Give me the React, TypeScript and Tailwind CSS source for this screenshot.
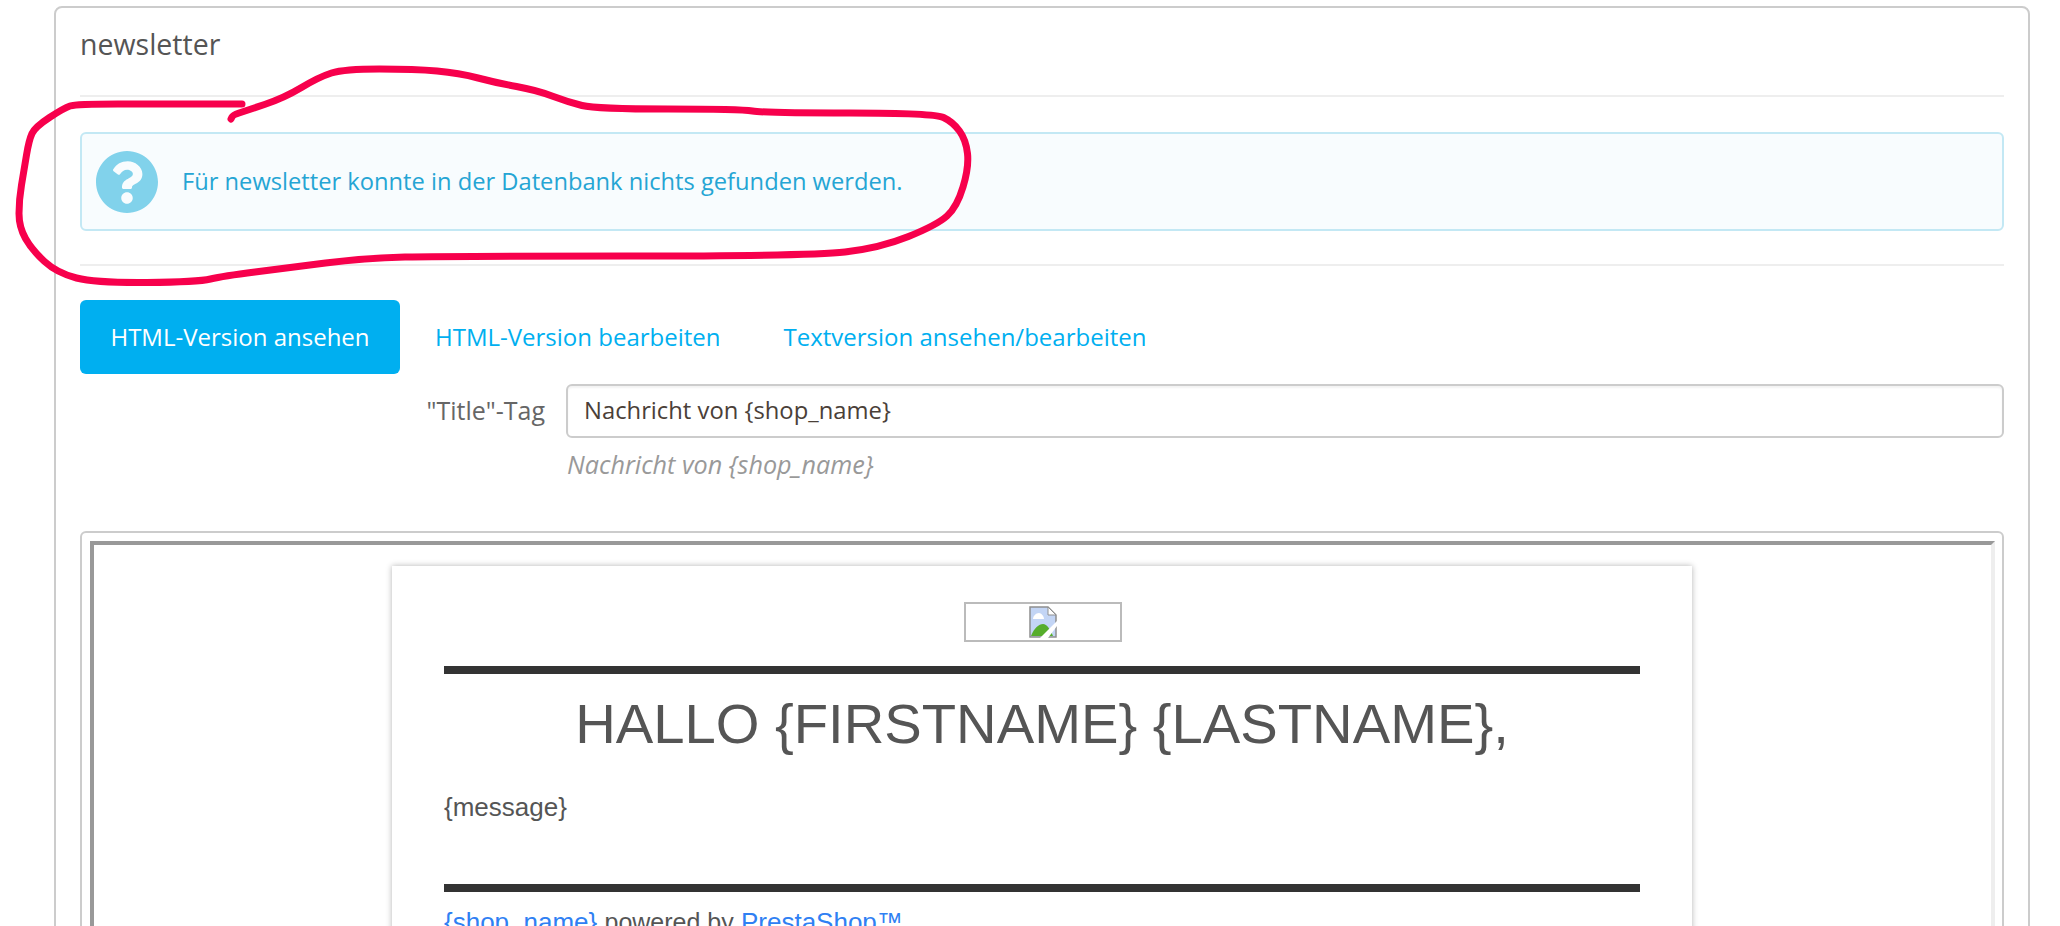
import { FaQuestionCircle } from "react-icons/fa";

const annotationPoints: [number, number][] = [
  [242, 104], [160, 104], [76, 104], [64, 108], [35, 127], [29, 140], [24, 170], [19, 200], [19, 227],
  [32, 250], [57, 273], [96, 283], [198, 282], [223, 276], [287, 268], [364, 258], [446, 256],
  [810, 256], [880, 248], [937, 225], [957, 207], [969, 167], [966, 140], [953, 122], [934, 113],
  [765, 113], [740, 109], [596, 109], [568, 102], [536, 90], [497, 83], [459, 73], [415, 69],
  [344, 69], [319, 77], [284, 98], [245, 111], [233, 115], [231, 119],
];

function smoothPath(points: [number, number][]) {
  let d = `M${points[0][0]} ${points[0][1]}`;
  for (let i = 1; i < points.length - 1; i++) {
    const [x, y] = points[i];
    const [nx, ny] = points[i + 1];
    d += ` Q${x} ${y} ${(x + nx) / 2} ${(y + ny) / 2}`;
  }
  const last = points[points.length - 1];
  return `${d} L${last[0]} ${last[1]}`;
}

function BrokenImage() {
  return (
    <svg width="28" height="32" viewBox="0 0 28 32" className="block">
      <path d="M1 1H19L27 9V31H1Z" fill="#c3d5f5" stroke="#8f8f8f" strokeWidth="1.5" />
      <path d="M19 1V9H27Z" fill="#fff" stroke="#8f8f8f" strokeWidth="1" />
      <path d="M4 13C4 10 7 7 10 7C12 7 15 10 15 13Z" fill="#fff" />
      <path d="M2 30C5 22 10 18 14 18C18 18 21 23 24 30Z" fill="#56ad2c" />
      <path d="M11 32L28 15V20L19 32Z" fill="#fff" />
    </svg>
  );
}

export default function App() {
  return (
    <div className="relative h-[926px] w-[2060px] overflow-hidden bg-white pl-[54px] pt-[6px] font-['Open_Sans',sans-serif]">
      <div className="h-[1100px] w-[1976px] rounded-lg border-2 border-[#ccc] px-[24px]">
        <h1 className="flex h-[89px] items-center border-b-2 border-[#eee] pb-[14px] text-[28.5px] font-normal text-[#555]">
          newsletter
        </h1>

        <div className="mt-[35px] flex h-[99px] items-center rounded-md border-2 border-[#c3e8f4] bg-[#f8fcfe] pl-[13px]">
          <FaQuestionCircle className="h-[64px] w-[64px] text-[#81d2eb]" />
          <p className="ml-[23px] text-[23.7px] text-[#25a5d4]">
            Für newsletter konnte in der Datenbank nichts gefunden werden.
          </p>
        </div>

        <div className="mt-[33px] h-[2px] bg-[#eee]" />

        <div className="mt-[34px] flex items-center text-[24px]">
          <a className="flex h-[74px] w-[320px] items-center justify-center rounded-md bg-[#00aff0] font-medium text-white">
            HTML-Version ansehen
          </a>
          <a className="ml-[35px] text-[#00aff0]">HTML-Version bearbeiten</a>
          <a className="ml-[63px] text-[#00aff0]">Textversion ansehen/bearbeiten</a>
        </div>

        <div className="mt-[10px] flex">
          <label className="flex h-[54px] w-[465px] items-center justify-end text-[25px] text-[#666]">
            "Title"-Tag
          </label>
          <div className="ml-[21px] flex h-[54px] flex-1 items-center rounded-md border-2 border-[#ccc] pl-[16px] text-[23.8px] text-[#4a4038] shadow-[inset_0_2px_2px_rgba(0,0,0,0.05)]">
            Nachricht von {"{shop_name}"}
          </div>
        </div>
        <p className="ml-[487px] mt-[8px] text-[25.2px] italic text-[#999]">Nachricht von {"{shop_name}"}</p>

        <div className="mt-[47px] h-[600px] rounded-md border-2 border-[#ccc] pl-[8px] pr-[7px] pt-[8px]">
          <div className="h-[600px] border-4 border-b-[#eee] border-l-[#999] border-r-[#eee] border-t-[#999] pt-[21px] font-['Liberation_Sans',sans-serif]">
            <div className="ml-[298px] h-[600px] w-[1300px] px-[52px] pt-[36px] shadow-[0_0_6px_rgba(0,0,0,0.3)]">
              <div className="ml-[520px] flex h-[40px] w-[158px] items-center justify-center border-2 border-[#bbb]">
                <BrokenImage />
              </div>
              <div className="mt-[24px] h-[8px] bg-[#333]" />
              <h2 className="mt-[15px] text-center text-[56.2px] font-normal leading-[70px] text-[#555]">
                HALLO {"{FIRSTNAME}"} {"{LASTNAME}"},
              </h2>
              <p className="mt-[32px] text-[26px] leading-[32px] text-[#555]">{"{message}"}</p>
              <div className="mt-[61px] h-[8px] bg-[#333]" />
              <p className="mt-[14px] text-[26px] leading-[32px] text-[#555]">
                <a className="text-[#2f80f3]">{"{shop_name}"}</a> <span className="text-[25px]">powered by</span>{" "}
                <a className="text-[#2f80f3]">PrestaShop™</a>
              </p>
            </div>
          </div>
        </div>
      </div>

      <svg className="pointer-events-none absolute left-0 top-0" width="2060" height="926">
        <path
          d={smoothPath(annotationPoints)}
          fill="none"
          stroke="#f7004c"
          strokeWidth="7"
          strokeLinecap="round"
          strokeLinejoin="round"
        />
      </svg>
    </div>
  );
}
